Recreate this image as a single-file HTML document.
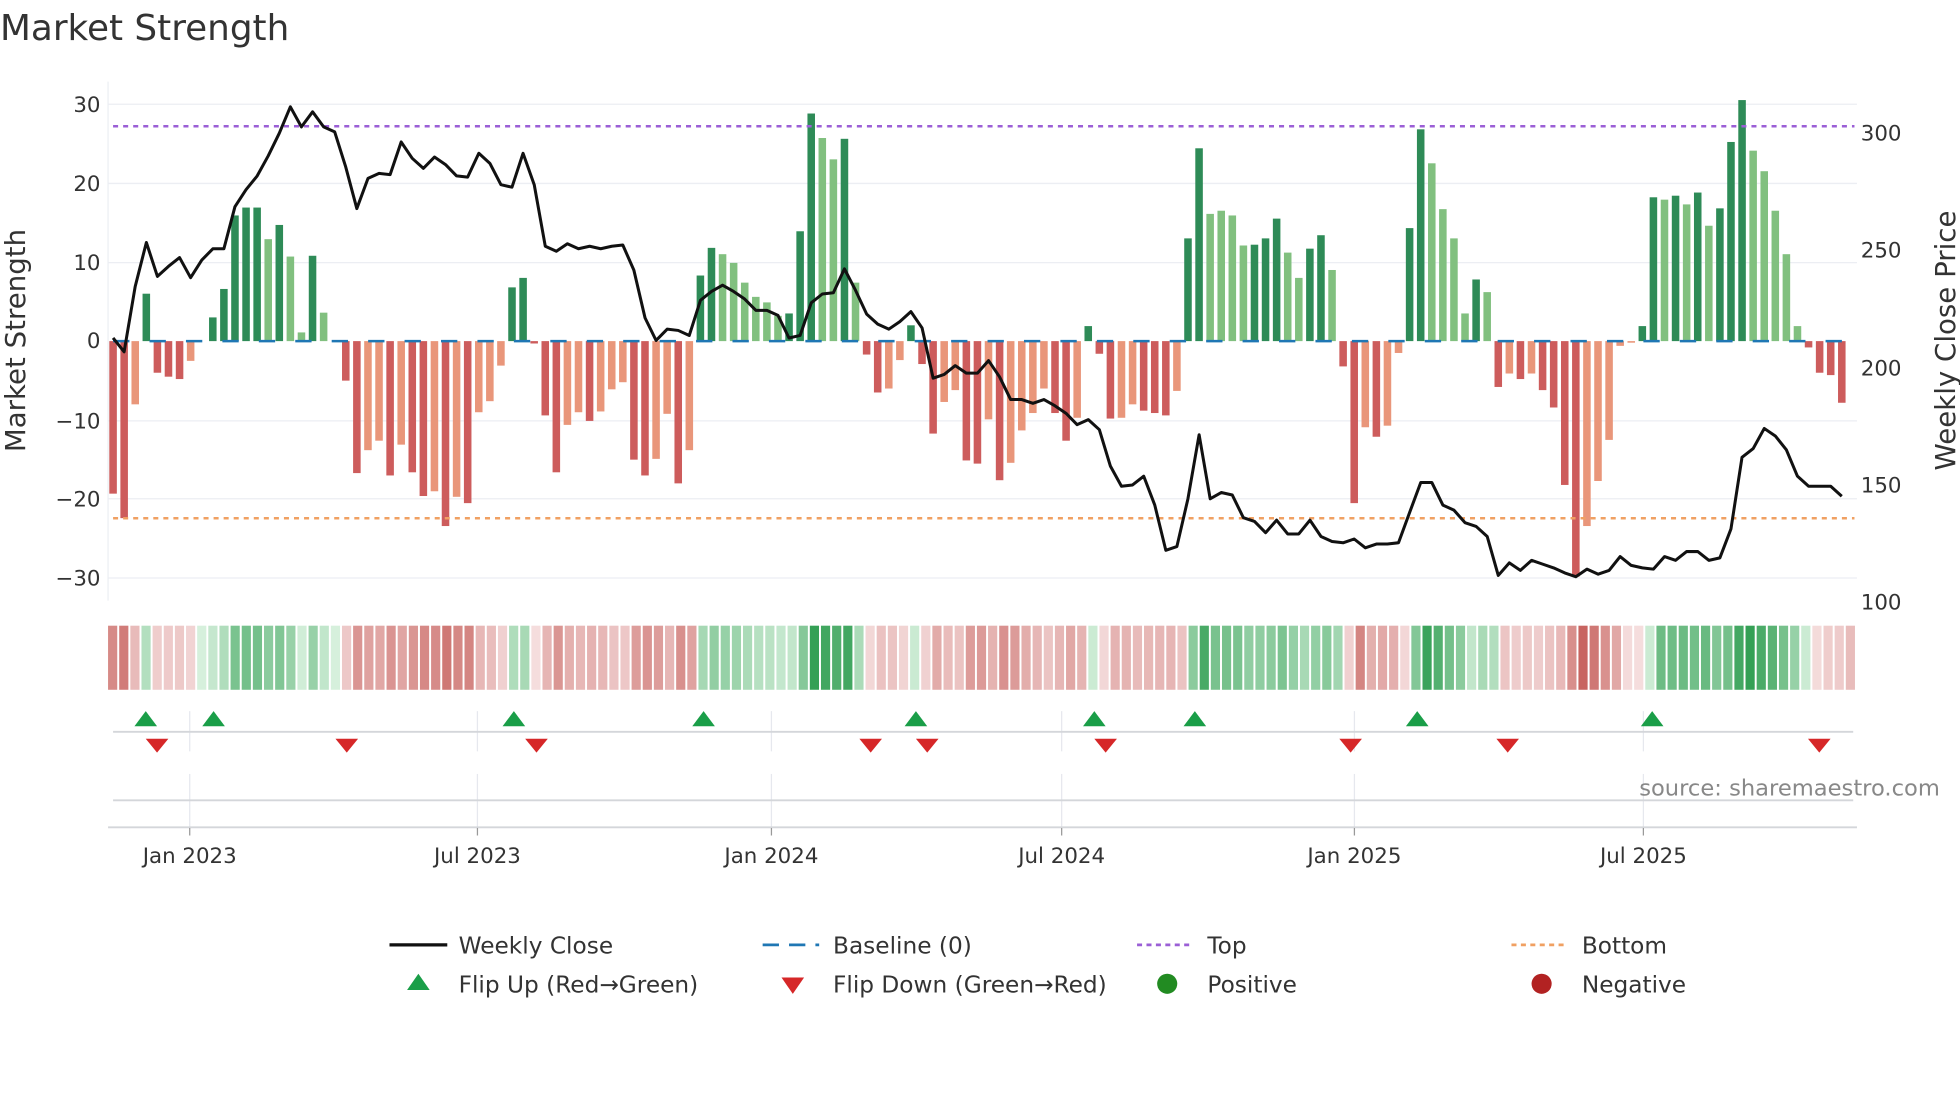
<!DOCTYPE html>
<html><head><meta charset="utf-8"><style>
html,body{margin:0;padding:0;background:#fff;}
svg{display:block;font-family:"DejaVu Sans","Liberation Sans",sans-serif;}
</style></head><body>
<svg id="s" width="1960" height="1102" viewBox="0 0 1560 877.1" xmlns="http://www.w3.org/2000/svg">
<rect width="1560" height="877.1" fill="#fff"/>
<text x="0" y="32" font-size="28.5" fill="#333">Market Strength</text>
<g stroke="#eceef3" stroke-width="1">
<line x1="86" y1="83" x2="1478" y2="83"/><line x1="86" y1="146" x2="1478" y2="146"/><line x1="86" y1="209" x2="1478" y2="209"/>
<line x1="86" y1="335" x2="1478" y2="335"/><line x1="86" y1="397" x2="1478" y2="397"/><line x1="86" y1="460" x2="1478" y2="460"/>
<line x1="86" y1="65" x2="86" y2="478"/>
</g>
<g font-size="17" fill="#333" text-anchor="end">
<text x="80" y="89">30</text><text x="80" y="152">20</text><text x="80" y="215">10</text><text x="80" y="277">0</text>
<text x="80" y="341">−10</text><text x="80" y="403">−20</text><text x="80" y="466">−30</text>
</g>
<g font-size="17" fill="#333">
<text x="1481" y="112">300</text><text x="1481" y="205">250</text><text x="1481" y="299">200</text><text x="1481" y="392">150</text><text x="1481" y="485">100</text>
</g>
<text transform="translate(20,271) rotate(-90)" font-size="22" fill="#333" text-anchor="middle">Market Strength</text>
<text transform="translate(1556,271) rotate(-90)" font-size="22" fill="#333" text-anchor="middle">Weekly Close Price</text>
<g id="bars"></g>
<line x1="90" y1="271.5" x2="1476" y2="271.5" stroke="#1f77b4" stroke-width="2" stroke-dasharray="13 16"/>
<line x1="90" y1="100.5" x2="1476" y2="100.5" stroke="#9b5fd6" stroke-width="2" stroke-dasharray="4 4"/>
<line x1="90" y1="412.5" x2="1476" y2="412.5" stroke="#f0a062" stroke-width="2" stroke-dasharray="4 4"/>
<polyline id="price" fill="none" stroke="#111" stroke-width="2.4" stroke-linejoin="round"/>
<g id="heat"></g>
<g stroke="#e6e8ee" stroke-width="1">
<line x1="151" y1="566" x2="151" y2="598"/><line x1="380" y1="566" x2="380" y2="598"/><line x1="614" y1="566" x2="614" y2="598"/>
<line x1="845" y1="566" x2="845" y2="598"/><line x1="1078" y1="566" x2="1078" y2="598"/><line x1="1308" y1="566" x2="1308" y2="598"/>
<line x1="151" y1="616" x2="151" y2="658"/><line x1="380" y1="616" x2="380" y2="658"/><line x1="614" y1="616" x2="614" y2="658"/>
<line x1="845" y1="616" x2="845" y2="658"/><line x1="1078" y1="616" x2="1078" y2="658"/><line x1="1308" y1="616" x2="1308" y2="658"/>
</g>
<line x1="90" y1="582.5" x2="1475" y2="582.5" stroke="#d4d6da" stroke-width="1.5"/>
<line x1="90" y1="637" x2="1475" y2="637" stroke="#d4d6da" stroke-width="1.5"/>
<line x1="86" y1="658.5" x2="1478" y2="658.5" stroke="#d4d6da" stroke-width="1.5"/>
<g stroke="#999" stroke-width="1">
<line x1="151" y1="659" x2="151" y2="665"/><line x1="380" y1="659" x2="380" y2="665"/><line x1="614" y1="659" x2="614" y2="665"/>
<line x1="845" y1="659" x2="845" y2="665"/><line x1="1078" y1="659" x2="1078" y2="665"/><line x1="1308" y1="659" x2="1308" y2="665"/>
</g>
<g id="marks"></g>
<text x="1544" y="633" font-size="18" fill="#888" text-anchor="end">source: sharemaestro.com</text>
<g font-size="17" fill="#333" text-anchor="middle">
<text x="151" y="687">Jan 2023</text><text x="380" y="687">Jul 2023</text><text x="614" y="687">Jan 2024</text>
<text x="845" y="687">Jul 2024</text><text x="1078" y="687">Jan 2025</text><text x="1308" y="687">Jul 2025</text>
</g>
<g font-size="18.5" fill="#333">
<line x1="310" y1="752" x2="356" y2="752" stroke="#111" stroke-width="2.6"/>
<text x="365" y="759">Weekly Close</text>
<line x1="607" y1="752" x2="652" y2="752" stroke="#1f77b4" stroke-width="2.2" stroke-dasharray="13 8"/>
<text x="663" y="759">Baseline (0)</text>
<line x1="905" y1="752" x2="950" y2="752" stroke="#9b5fd6" stroke-width="2.2" stroke-dasharray="4 3.5"/>
<text x="961" y="759">Top</text>
<line x1="1203" y1="752" x2="1248" y2="752" stroke="#f0a062" stroke-width="2.2" stroke-dasharray="4 3.5"/>
<text x="1259" y="759">Bottom</text>
<polygon points="333,775 324,788 342,788" fill="#1a9e48"/>
<text x="365" y="790">Flip Up (Red→Green)</text>
<polygon points="622,778 640,778 631,791" fill="#d62728"/>
<text x="663" y="790">Flip Down (Green→Red)</text>
<circle cx="929" cy="783" r="8" fill="#228b22"/>
<text x="961" y="790">Positive</text>
<circle cx="1227" cy="783" r="8" fill="#b22222"/>
<text x="1259" y="790">Negative</text>
</g>
</svg>
<script>
var V=[-19.3,-22.4,-8,6,-4,-4.5,-4.8,-2.5,0,3,6.6,15.9,16.9,16.9,12.9,14.7,10.7,1.1,10.8,3.6,0,-5,-16.7,-13.8,-12.6,-17,-13.1,-16.6,-19.6,-19,-23.4,-19.7,-20.5,-9,-7.6,-3.1,6.8,8,-0.3,-9.4,-16.6,-10.6,-9,-10.1,-8.9,-6.1,-5.2,-15,-17,-14.9,-9.2,-18,-13.8,
8.3,11.8,11,9.9,7.4,5.6,4.9,3.2,3.5,13.9,28.8,25.7,23,25.6,7.4,-1.7,-6.5,-6,-2.4,2,-2.9,-11.7,-7.7,-6.2,-15.1,-15.5,-9.9,-17.6,-15.4,-11.3,-9.1,-6,-9.1,-12.6,-9.7,1.9,-1.6,-9.8,-9.7,-8,-8.8,-9.1,-9.4,-6.3,13,24.4,16.1,16.5,
15.9,12.1,12.2,13,15.5,11.2,8,11.7,13.4,9,-3.2,-20.5,-10.9,-12.1,-10.7,-1.5,14.3,26.8,22.5,16.7,13,3.5,7.8,6.2,-5.8,-4.1,-4.8,-4.1,-6.2,-8.4,-18.2,-29.8,-23.4,-17.7,-12.5,-0.6,-0.2,1.9,18.2,17.9,18.4,17.3,18.8,14.6,16.8,25.2,30.5,24.1,21.5,16.5,11,1.9,-0.8,-4,-4.3,-7.8];
var D="1101111001"+"1111010010"+"0110010110"+"1010001111"+"1001000110"+"0101100000"+"0111001011"+"0011100110"+"1000011011"+"1001110110"+"0001110011"+"0110100110"+"0001010101"+"1110000011"+"0101011100"+"0001111";
var P=[269,280,228,193,220,212,205,221,207,198,198,164.5,151,140,124,106,85,101,89,101,105,133,166,142,138,139,113,126,134,125,131,140,141,122,130,147,149,122,147,196,200,194,198,196,198,196,195,215,253,271,262,263,267,
239,232,227,232,238,247,247,251,269,267,241,234,233,214,231,250,258,262,256,248,261,301,298,291,297,297,287,300,318,318,321,318,323,329,338,334,342,371,387,386,379,402,438,435,397,346,397,392,394,412,415,424,414,425,425,414,427,431,432,
429,436,433,433,432,408,384,384,402,406,416,419,427,458,448,454,446,449,452,456,459,453,457,454,443,450,452,453,443,446,439,439,446,444,421,364,357,341,347,358,379,387,387,387,395];
var NS="http://www.w3.org/2000/svg";
function el(t,a,p){var e=document.createElementNS(NS,t);for(var k in a)e.setAttribute(k,a[k]);document.getElementById(p).appendChild(e);}
function mix(a,b,t){var r=[];for(var i=0;i<3;i++)r.push(Math.round(a[i]+(b[i]-a[i])*t));return "rgb("+r.join(",")+")";}
var pts=[];
for(var i=0;i<V.length;i++){
 var x=90+8.82*i,v=V[i],dk=D.charAt(i)=="1";
 var y0=271.5,y1=271.5-v*6.29;
 var c=v>=0?(dk?"#2e8b57":"#81c07f"):(dk?"#cd5c5c":"#e9967a");
 if(Math.abs(v)>0.05) el("rect",{x:x-3,y:Math.min(y0,y1),width:6,height:Math.abs(y1-y0),fill:c},"bars");
 pts.push(x.toFixed(1)+","+P[i]);
 var t=Math.min(Math.abs(v)/28,1);
 var hc=v>=0?mix([214,240,220],[52,160,85],t):mix([245,222,222],[200,100,96],t);
 el("rect",{x:(86+i*8.866).toFixed(2),y:498,width:7.3,height:51,fill:hc},"heat");
}
document.getElementById("price").setAttribute("points",pts.join(" "));
[116,170,409,560,729,871,951,1128,1315].forEach(function(x){el("polygon",{points:(x)+",566 "+(x-9)+",578 "+(x+9)+",578",fill:"#1a9e48"},"marks");});
[125,276,427,693,738,880,1075,1200,1448].forEach(function(x){el("polygon",{points:(x-9)+",588 "+(x+9)+",588 "+x+",599",fill:"#d62728"},"marks");});
</script>
</body></html>
